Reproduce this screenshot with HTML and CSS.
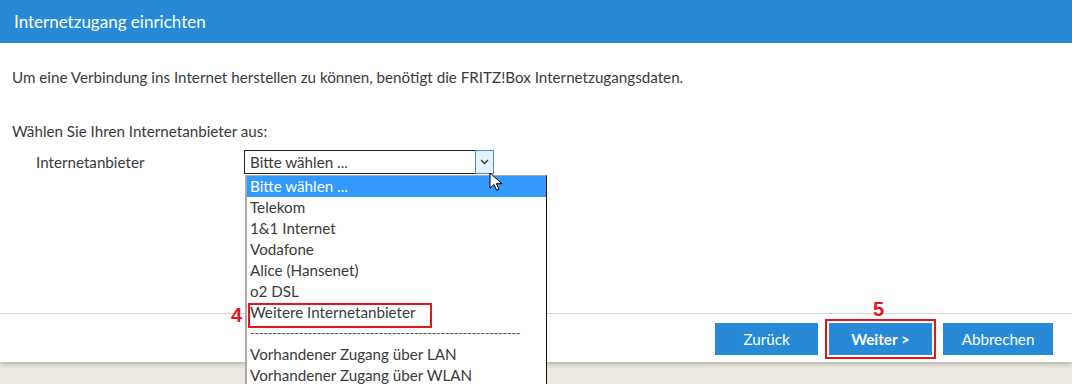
FILE: index.html
```html
<!DOCTYPE html>
<html lang="de">

<head>
    <meta charset="UTF-8">
    <meta name="viewport" content="width=device-width, initial-scale=1.0">
    <title>Internetzugang einrichten</title>
    <link rel="stylesheet" href="styles.css">
</head>

<body>
    <div class="page">
        <header class="header">Internetzugang einrichten</header>

        <main class="content">
            <p class="intro">Um eine Verbindung ins Internet herstellen zu können, benötigt die FRITZ!Box Internetzugangsdaten.</p>
            <p class="ask">Wählen Sie Ihren Internetanbieter aus:</p>

            <div class="form-row">
                <label class="form-label">Internetanbieter</label>
                <div class="select-wrap">
                    <div class="select">
                        <span class="select-value">Bitte wählen ...</span>
                        <span class="select-arrow">
                            <svg width="9" height="6" viewBox="0 0 9 6"><path d="M1 1l3.5 3.5L8 1" fill="none" stroke="#333" stroke-width="1.3"/></svg>
                        </span>
                    </div>
                    <svg class="cursor" width="14" height="20" viewBox="0 0 14 20"><path d="M1 1v15l4-3.5 2.6 5.8 2.4-1-2.6-5.6H13z" fill="#fff" stroke="#000" stroke-width="1" stroke-linejoin="round"/></svg>
                    <ul class="options">
                        <li class="option selected">Bitte wählen ...</li>
                        <li class="option">Telekom</li>
                        <li class="option">1&amp;1 Internet</li>
                        <li class="option">Vodafone</li>
                        <li class="option">Alice (Hansenet)</li>
                        <li class="option">o2 DSL</li>
                        <li class="option marked">Weitere Internetanbieter<span class="mark-box"></span><span class="mark-num mark-4">4</span></li>
                        <li class="option sep">-------------------------------------------------------------</li>
                        <li class="option">Vorhandener Zugang über LAN</li>
                        <li class="option">Vorhandener Zugang über WLAN</li>
                    </ul>
                </div>
            </div>
        </main>

        <footer class="footer">
            <button class="btn" type="button">Zurück</button>
            <div class="btn-marked">
                <span class="mark-num mark-5">5</span>
                <button class="btn btn-main" type="button">Weiter &gt;</button>
            </div>
            <button class="btn btn-wide" type="button">Abbrechen</button>
        </footer>
    </div>
</body>

</html>
```

FILE: styles.css
```css
body {
    margin: 0;
    height: 384px;
    overflow: hidden;
    background: #edeae4;
    font-family: "Lato", "Liberation Sans", sans-serif;
    font-size: 15.2px;
    color: #3a3a3a;
}

.page {
    background: #fff;
    box-shadow: 0 2px 5px rgba(0, 0, 0, 0.25);
}

.header {
    height: 43px;
    line-height: 43px;
    padding-left: 14px;
    background: #268ad9;
    color: #fff;
    font-size: 17px;
}

.content {
    height: 270px;
    padding: 0 12px;
    box-sizing: border-box;
}

.intro {
    margin: 0;
    padding-top: 24px;
    line-height: 20px;
}

.ask {
    margin: 0;
    padding-top: 34px;
    line-height: 20px;
}

.form-row {
    display: flex;
    align-items: center;
    margin-top: 9px;
    padding-left: 24px;
}

.form-label {
    width: 208px;
}

.select-wrap {
    position: relative;
}

.select {
    display: flex;
    width: 250px;
    height: 24px;
    box-sizing: border-box;
    border: 1px solid #222;
    background: #fff;
}

.select-value {
    flex: 1;
    padding-left: 5px;
    line-height: 22px;
}

.select-arrow {
    width: 17px;
    margin: -1px -1px -1px 0;
    display: flex;
    align-items: center;
    justify-content: center;
    border: 1px solid #3c8fe0;
    background: #e5f1fb;
}

.cursor {
    position: absolute;
    left: 245px;
    top: 22px;
    z-index: 3;
}

.options {
    position: absolute;
    left: 1px;
    top: 25px;
    width: 302px;
    margin: 0;
    padding: 0;
    list-style: none;
    background: #fff;
    border-top: 1px solid #a9a9a9;
    border-left: 2px solid #a9a9a9;
    border-right: 1px solid #111;
    box-sizing: border-box;
    z-index: 2;
}

.option {
    position: relative;
    height: 21px;
    line-height: 21px;
    padding-left: 3px;
    white-space: nowrap;
}

.option.selected {
    background: #3399ff;
    color: #fff;
}

.option.sep {
    color: #555;
    letter-spacing: -0.4px;
    font-size: 13px;
}

.mark-box {
    position: absolute;
    left: 1px;
    top: 1px;
    width: 184px;
    height: 25px;
    border: 2px solid #e8141c;
    box-sizing: border-box;
}

.mark-num {
    position: absolute;
    color: #e8141c;
    font-family: "Liberation Sans", sans-serif;
    font-weight: bold;
    font-size: 20px;
    line-height: 20px;
}

.mark-4 {
    left: -16px;
    top: 3px;
}

.footer {
    height: 49px;
    border-top: 1px solid #d4d4d4;
    display: flex;
    justify-content: flex-end;
    align-items: flex-start;
    gap: 11px;
    padding: 9px 19px 0 0;
    box-sizing: border-box;
}

.btn {
    width: 103px;
    height: 32px;
    border: none;
    background: #268ad9;
    color: #fff;
    font-family: "Lato", "Liberation Sans", sans-serif;
    font-size: 15.2px;
    cursor: pointer;
}

.btn-wide {
    width: 110px;
}

.btn-main {
    font-weight: bold;
    outline: 2px solid #e8141c;
    outline-offset: 2px;
}

.btn-marked {
    position: relative;
}

.btn-marked .btn {
    display: block;
}

.mark-5 {
    left: 44px;
    top: -24px;
}
```
